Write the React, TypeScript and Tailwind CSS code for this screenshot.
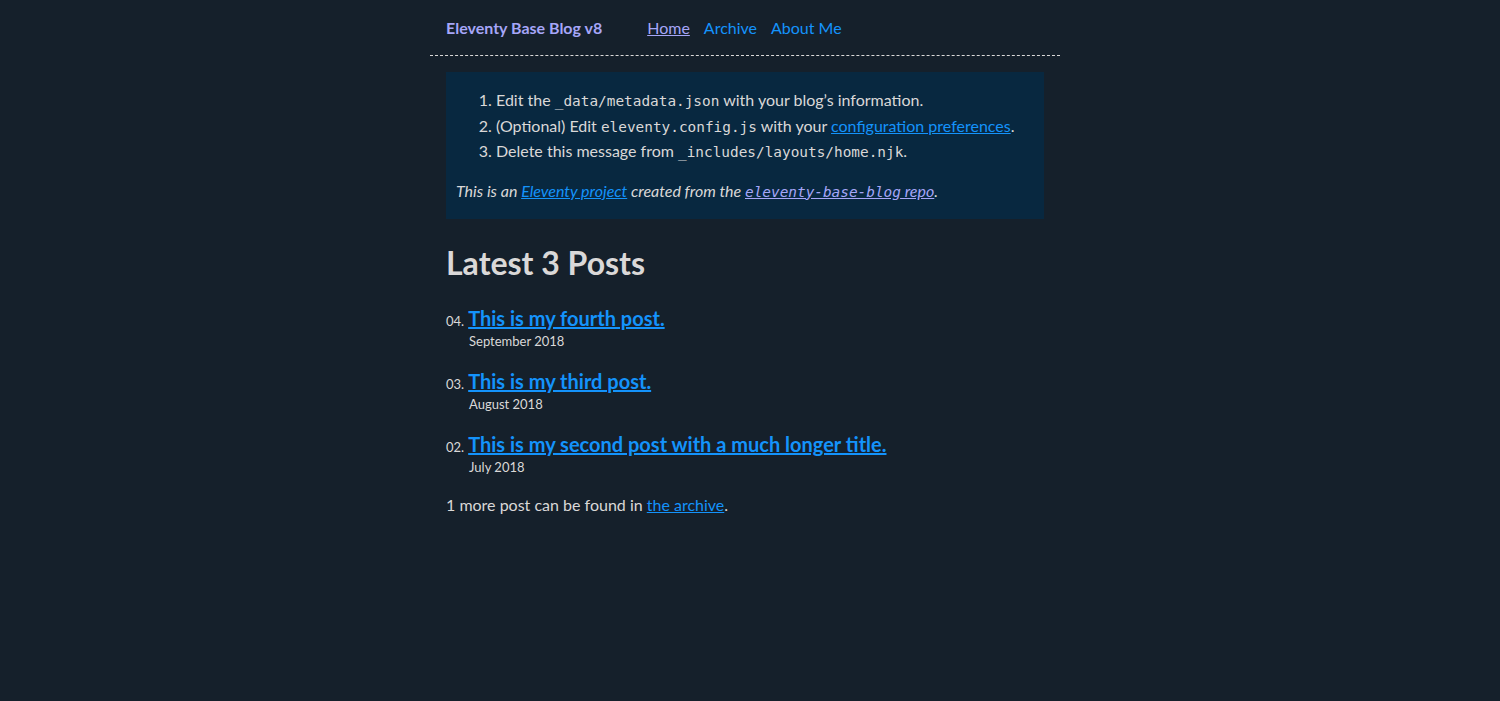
import React from "react";

const sans = { fontFamily: "Lato, 'Noto Sans', sans-serif" };

export default function App() {
  const mono = "font-['DejaVu_Sans_Mono',monospace] text-[14.4px] leading-none";
  return (
    <div className="flex min-h-[701px] w-full justify-center bg-[#15202b] pr-[10px] text-[#dad8d8]" style={sans}>
      <div className="w-[630px] text-[16px] leading-[1.5]">
        <header className="flex items-center gap-x-[45px] border-b border-dashed border-[#dad8d8] px-[16px] pt-[16px] pb-[15px]">
          <a className="font-bold text-[16px] text-[#a6a6f8]">Eleventy Base Blog v8</a>
          <nav className="flex gap-x-[14px] text-[16px]">
            <a className="text-[#a6a6f8] underline">Home</a>
            <a className="text-[#1493fb]">Archive</a>
            <a className="text-[#1493fb]">About Me</a>
          </nav>
        </header>
        <main className="p-[16px]">
          <div className="bg-[#082840] px-[10px] pt-[15px] pb-[16px]">
            <ol className="list-decimal pl-[40px] leading-[25.5px]">
              <li>
                Edit the <code className={mono}>_data/metadata.json</code> with your blog’s information.
              </li>
              <li>
                (Optional) Edit <code className={mono}>eleventy.config.js</code> with your{" "}
                <a className="text-[#1493fb] underline">configuration preferences</a>.
              </li>
              <li>
                Delete this message from <code className={mono}>_includes/layouts/home.njk</code>.
              </li>
            </ol>
            <p className="mt-[14px] italic leading-[25.5px]">
              This is an <a className="text-[#1493fb] underline">Eleventy project</a> created from the{" "}
              <a className="text-[#a6a6f8] underline">
                <code className={mono}>eleventy-base-blog</code> repo
              </a>
              .
            </p>
          </div>
          <h1 className="mt-[24px] text-[32px] font-bold leading-[40px]">Latest 3 Posts</h1>
          <ol className="mt-[24px] flex flex-col gap-y-[17px]">
            {[
              ["04.", "This is my fourth post.", "September 2018"],
              ["03.", "This is my third post.", "August 2018"],
              ["02.", "This is my second post with a much longer title.", "July 2018"],
            ].map(([n, t, d]) => (
              <li key={n} className="flex flex-col">
                <div className="flex h-[23px] items-baseline overflow-visible leading-[23px]">
                  <span className="mr-[4px] text-[13px]">{n}</span>
                  <a className="text-[20px] font-bold text-[#1493fb] underline">{t}</a>
                </div>
                <div className="h-[23px] pl-[23px] text-[13px] leading-[23px]">{d}</div>
              </li>
            ))}
          </ol>
          <p className="mt-[13px] leading-[25.5px]">
            1 more post can be found in <a className="text-[#1493fb] underline">the archive</a>.
          </p>
        </main>
      </div>
    </div>
  );
}
